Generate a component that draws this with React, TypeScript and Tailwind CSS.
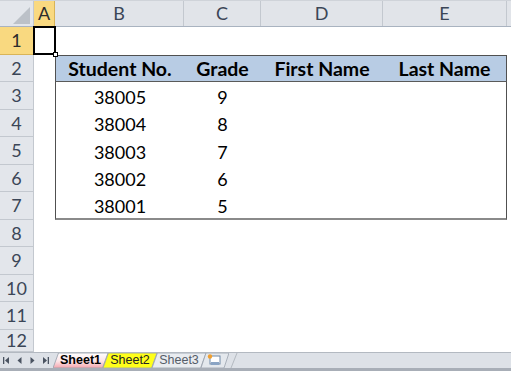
import React from "react";

const cols = [
  { key: "A", w: "w-[21px]" },
  { key: "B", w: "w-[129px]" },
  { key: "C", w: "w-[77px]" },
  { key: "D", w: "w-[122px]" },
  { key: "E", w: "w-[124px]" },
  { key: "", w: "w-[40px]" },
];

const rowHeights = [
  "h-[28px]",
  "h-[27px]",
  "h-[28px]",
  "h-[27px]",
  "h-[28px]",
  "h-[27px]",
  "h-[28px]",
  "h-[27px]",
  "h-[28px]",
  "h-[27px]",
  "h-[28px]",
  "h-[22px]",
];

const header = ["Student No.", "Grade", "First Name", "Last Name"];
const data = [
  ["38005", "9", "", ""],
  ["38004", "8", "", ""],
  ["38003", "7", "", ""],
  ["38002", "6", "", ""],
  ["38001", "5", "", ""],
];

const NavIcon = ({ kind }: { kind: "first" | "prev" | "next" | "last" }) => (
  <svg width="9" height="9" viewBox="0 0 9 9" className="text-[#4a5361]">
    {kind === "first" && (
      <>
        <rect x="1" y="1" width="1.3" height="7" fill="currentColor" />
        <path d="M7 1 L3 4.5 L7 8 Z" fill="currentColor" />
      </>
    )}
    {kind === "prev" && <path d="M6.5 1 L2.5 4.5 L6.5 8 Z" fill="currentColor" />}
    {kind === "next" && <path d="M2.5 1 L6.5 4.5 L2.5 8 Z" fill="currentColor" />}
    {kind === "last" && (
      <>
        <path d="M2 1 L6 4.5 L2 8 Z" fill="currentColor" />
        <rect x="6.7" y="1" width="1.3" height="7" fill="currentColor" />
      </>
    )}
  </svg>
);

const Tab = ({
  label,
  w,
  fill,
  text,
  bold,
  gradient,
}: {
  label: string;
  w: string;
  fill: string;
  text: string;
  bold?: boolean;
  gradient?: boolean;
}) => (
  <div className={`relative ${w} h-[15px] -mr-[5px] flex items-center justify-center`}>
    <svg className="absolute inset-0" width="100%" height="100%" preserveAspectRatio="none" viewBox="0 0 50 15">
      <defs>
        <linearGradient id="pinkTab" x1="0" y1="0" x2="0" y2="1">
          <stop offset="0" stopColor="#ffffff" />
          <stop offset="0.55" stopColor="#fde4e7" />
          <stop offset="1" stopColor="#f5a5ae" />
        </linearGradient>
      </defs>
      <polygon
        points="0,15 5,0 50,0 45,15"
        fill={gradient ? "url(#pinkTab)" : fill}
        stroke="#9aa2ad"
        strokeWidth="0.8"
      />
    </svg>
    <span
      className={`relative text-[12.5px] leading-none font-['Liberation_Sans',Arial,sans-serif] ${text} ${bold ? "font-bold" : ""}`}
    >
      {label}
    </span>
  </div>
);

export default function App() {
  return (
    <div className="w-[511px] h-[371px] overflow-hidden bg-white flex flex-col font-['Lato','Open_Sans',sans-serif]">
      {/* Column headers */}
      <div className="flex h-[27px] shrink-0 border-b border-[#a9b3c0] border-t border-t-[#cfd3d9]">
        <div className="w-[34px] shrink-0 bg-[#e3e6eb] border-r border-[#c3c8cf] relative">
          <svg className="absolute right-[2px] bottom-[2px]" width="18" height="17" viewBox="0 0 18 17">
            <path d="M17 0 L17 17 L0 17 Z" fill="#bcc1c8" />
          </svg>
        </div>
        {cols.map((c) => (
          <div
            key={c.w}
            className={`${c.w} shrink-0 flex items-center justify-center text-[18px] border-r ${
              c.key === "A"
                ? "bg-[#f9d980] border-[#d9b457] text-[#2c2c2c]"
                : "bg-[#e1e4e9] border-[#c3c8cf] text-[#3b4657]"
            }`}
          >
            {c.key}
          </div>
        ))}
      </div>

      {/* Rows */}
      <div className="flex flex-col flex-1 min-h-0">
        {rowHeights.map((h, ri) => {
          const r = ri + 1;
          const inTable = r >= 2 && r <= 7;
          return (
            <div key={r} className={`flex ${h} shrink-0`}>
              <div
                className={`w-[34px] shrink-0 flex items-center justify-center text-[18px] border-b border-r ${
                  r === 1
                    ? "bg-[#f9d980] border-[#d9b457] text-[#2c2c2c]"
                    : "bg-[#e3e6eb] border-[#c3c8cf] text-[#3b4657]"
                }`}
              >
                {r}
              </div>
              {cols.map((c, ci) => {
                if (c.key === "A") {
                  return (
                    <div key={c.w} className={`${c.w} shrink-0 relative`}>
                      {r === 1 && (
                        <>
                          <div className="absolute -top-[1px] -left-[1px] -right-[1px] bottom-0 border-2 border-black" />
                          <div className="absolute -right-[3px] -bottom-[2px] w-[5px] h-[5px] bg-white border border-black" />
                        </>
                      )}
                    </div>
                  );
                }
                const tableCol = ci >= 1 && ci <= 4;
                let cls = `${c.w} shrink-0 flex items-center justify-center`;
                let content = "";
                if (inTable && tableCol) {
                  if (ci === 1) cls += " border-l border-[#505050]";
                  if (ci === 4) cls += " border-r border-r-[#505050]";
                  if (r === 2) {
                    cls += " bg-[#b8cce4] border-t border-t-[#505050] border-b border-b-[#5a5a5a] font-bold text-[19.5px] text-black";
                    content = header[ci - 1];
                  } else {
                    cls += " text-[18px] text-black pt-[2px]";
                    content = data[r - 3][ci - 1];
                    if (r === 7) cls += " border-b-2 border-b-[#8a8a8a]";
                  }
                }
                return (
                  <div key={c.w} className={cls}>
                    {content}
                  </div>
                );
              })}
            </div>
          );
        })}
      </div>

      {/* Sheet tabs */}
      <div className="h-[19px] shrink-0 bg-[#dde1e7] border-t border-[#b3b9c1] border-b-[3px] border-b-[#a8aeb7] flex items-start">
        <div className="w-[53px] flex items-center gap-[4px] pl-[2px] h-[15px]">
          <NavIcon kind="first" />
          <NavIcon kind="prev" />
          <NavIcon kind="next" />
          <NavIcon kind="last" />
        </div>
        <div className="flex items-start">
          <Tab label="Sheet1" w="w-[55px]" fill="#fff" text="text-black" bold gradient />
          <Tab label="Sheet2" w="w-[54px]" fill="#ffff1a" text="text-[#222]" />
          <Tab label="Sheet3" w="w-[54px]" fill="#e9ecf0" text="text-[#555d68]" />
          <div className="relative w-[28px] h-[15px] flex items-center justify-center">
            <svg className="absolute inset-0" width="28" height="15" viewBox="0 0 28 15">
              <polygon points="0,15 5,0 28,0 23,15" fill="#e4e8ed" stroke="#9aa2ad" strokeWidth="0.8" />
              <rect x="9" y="3" width="10" height="8" fill="#ffffff" stroke="#6f87a6" strokeWidth="1" />
              <rect x="10" y="9" width="8" height="3" fill="#8aa4c4" />
              <circle cx="9" cy="3.5" r="2.2" fill="#f0a030" />
            </svg>
          </div>
          <svg width="14" height="15" viewBox="0 0 14 15">
            <line x1="2" y1="15" x2="8" y2="0" stroke="#a8aeb7" strokeWidth="0.8" />
          </svg>
        </div>
      </div>
    </div>
  );
}
